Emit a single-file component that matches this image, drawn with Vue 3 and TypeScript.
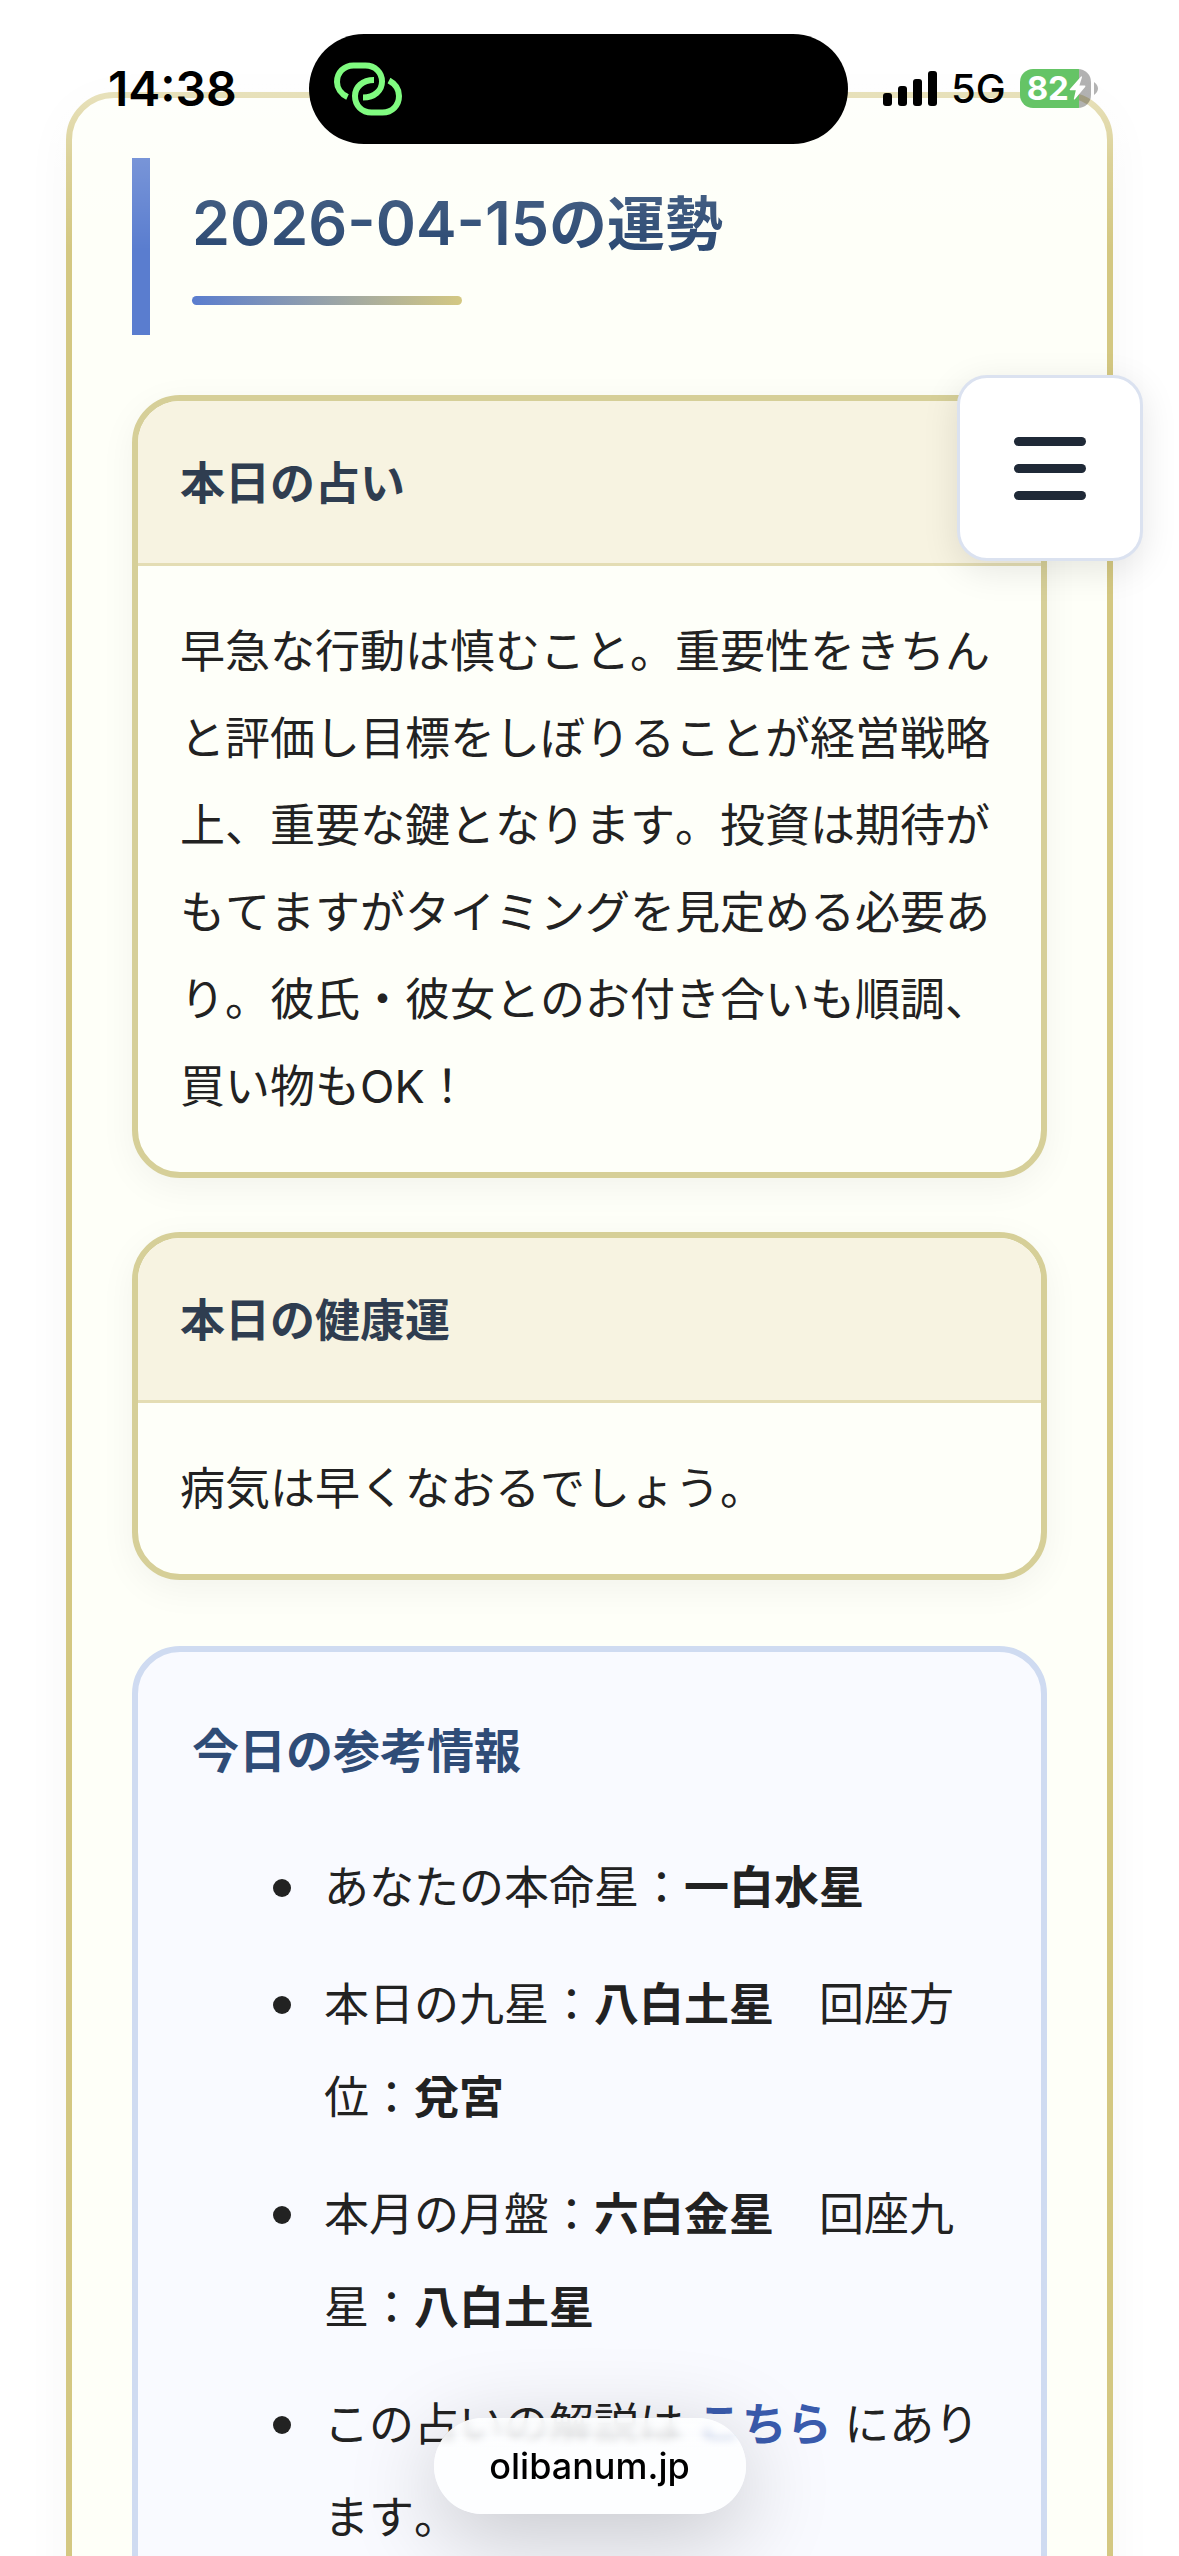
<script setup lang="ts">
interface Fortune {
  id: string
  title: string
  text: string
}

const date = '2026-04-15'

const fortunes: Fortune[] = [
  {
    id: 'today',
    title: '本日の占い',
    text: '早急な行動は慎むこと。重要性をきちんと評価し目標をしぼりることが経営戦略上、重要な鍵となります。投資は期待がもてますがタイミングを見定める必要あり。彼氏・彼女とのお付き合いも順調、買い物もOK！',
  },
  { id: 'health', title: '本日の健康運', text: '病気は早くなおるでしょう。' },
]
</script>

<template>
  <div class="screen">
    <main class="page">
      <article class="panel">
        <header class="heading">
          <h1 class="heading-title"><time>{{ date }}</time>の運勢</h1>
          <div class="heading-rule"></div>
        </header>

        <div class="cards">
          <section v-for="f in fortunes" :key="f.id" class="card">
            <h2 class="card-title">{{ f.title }}</h2>
            <p class="card-text">{{ f.text }}</p>
          </section>
        </div>

        <section class="info">
          <h2 class="info-title">今日の参考情報</h2>
          <ul class="info-list">
            <li><span>あなたの本命星：<strong>一白水星</strong></span></li>
            <li><span>本日の九星：<strong>八白土星</strong>　回座方位：<strong>兌宮</strong></span></li>
            <li><span>本月の月盤：<strong>六白金星</strong>　回座九星：<strong>八白土星</strong></span></li>
            <li><span>この占いの解説は <a href="#guide">こちら</a> にあります。</span></li>
          </ul>
        </section>
      </article>
    </main>

    <button class="menu" type="button" aria-label="メニュー">
      <span></span>
      <span></span>
      <span></span>
    </button>

    <div class="status">
      <div class="status-side status-left"><time class="clock">14:38</time></div>
      <div class="island">
        <svg class="link-icon" width="68" height="54" viewBox="0 0 68 54" fill="none" stroke="#80fb80" stroke-width="6">
          <path d="M13.500 35C7 32 3 26 3 20C3 10.500 10 3.500 19.500 3.500H31.500C41 3.500 48 10.500 48 19.500C48 28.500 40.500 35.500 29 35.500" />
          <path d="M40 18C28.500 18 21 25 21 34C21 43.500 28 50.500 37.500 50.500H48.500C58 50.500 65 43.500 65 34C65 27.500 61.500 22 55 18.500" />
        </svg>
      </div>
      <div class="status-side status-right">
        <svg width="54" height="35" viewBox="0 0 54 35" fill="#000">
          <rect x="0" y="22" width="9" height="13" rx="3" />
          <rect x="15" y="15" width="9" height="20" rx="3" />
          <rect x="30" y="8" width="9" height="27" rx="3" />
          <rect x="45" y="0" width="9" height="35" rx="3" />
        </svg>
        <span class="network">5G</span>
        <div class="battery">
          <div class="battery-body">
            <span>82</span>
            <svg width="17" height="24" viewBox="0 0 17 24" fill="#fff">
              <path d="M12 0.500L0.800 13.200Q0.300 14.300 1.500 14.300H6.800L4.800 23Q5 24 5.900 23.300L16.300 10.700Q16.800 9.600 15.600 9.600H10.400L13 1.200Q13 0 12 0.500Z" />
            </svg>
          </div>
          <svg width="4" height="13" viewBox="0 0 4 13" fill="#b3b3b3">
            <path d="M0 0C2.500 2 4 4 4 6.500S2.500 11 0 13Z" />
          </svg>
        </div>
      </div>
    </div>

    <button class="address" type="button">olibanum.jp</button>
  </div>
</template>

<style>
body {
  margin: 0;
  background: #fff;
}
</style>

<style scoped>
.screen {
  position: relative;
  height: 100vh;
  overflow: hidden;
  color: #222;
  font-family: Inter, "Noto Sans CJK JP", sans-serif;
  font-size: 45px;
  font-kerning: none;
}

h1,
h2,
p,
ul {
  margin: 0;
  padding: 0;
}

.page {
  padding: 92px 66px 0;
}

.panel {
  padding: 60px;
  border: 6px solid #d4c882;
  border-radius: 48px;
  background: #fefff8;
  box-shadow: 0 12px 48px rgba(0, 0, 0, 0.04);
}

.heading {
  padding: 18px 0 30px 42px;
  border-left: 18px solid #5a7dcf;
}

.heading-title {
  height: 94px;
  color: #2c4a73;
  font-size: 58px;
  font-weight: 600;
  line-height: 94px;
}

.heading-title time {
  font-size: 61px;
}

.heading-rule {
  width: 270px;
  height: 9px;
  margin-top: 26px;
  border-radius: 5px;
  background: linear-gradient(90deg, #5a7dcf, #d4c882);
}

.cards {
  display: flex;
  flex-direction: column;
  gap: 54px;
  margin: 60px 0 66px;
}

.card {
  overflow: hidden;
  border: 6px solid #d6cf98;
  border-radius: 48px;
  background: #fefff9;
  box-shadow: 0 9px 36px rgba(0, 0, 0, 0.05);
}

.card-title {
  padding: 38px 42px 34px;
  border-bottom: 3px solid #e4ddb4;
  background: #f7f3e1;
  color: #2f3d50;
  font-size: 45px;
  font-weight: 600;
  line-height: 90px;
}

.card-text {
  padding: 42px;
  line-height: 87px;
}

.info {
  padding: 54px;
  border: 6px solid #cfdbf1;
  border-radius: 48px;
  background: #f9faff;
}

.info-title {
  margin-bottom: 45px;
  color: #2f4c77;
  font-size: 47px;
  font-weight: 600;
  line-height: 90px;
}

.info-list {
  display: flex;
  flex-direction: column;
  gap: 24px;
  padding-left: 81px;
  list-style: none;
  line-height: 93px;
}

.info-list li {
  display: grid;
  grid-template-columns: 18px 1fr;
  column-gap: 33px;
}

.info-list li::before {
  width: 18px;
  height: 18px;
  margin-top: 38px;
  border-radius: 50%;
  background: #222;
  content: "";
}

.info-list strong {
  font-weight: 700;
}

.info-list a {
  color: #3a5bad;
  font-weight: 700;
  text-decoration: none;
}

.menu {
  position: absolute;
  top: 375px;
  right: 36px;
  display: flex;
  flex-direction: column;
  align-items: center;
  justify-content: center;
  gap: 18px;
  width: 186px;
  height: 186px;
  padding: 0;
  border: 3px solid #dbe2f0;
  border-radius: 30px;
  background: #fff;
  box-shadow: 0 9px 36px rgba(0, 0, 0, 0.1);
}

.menu span {
  width: 72px;
  height: 9px;
  border-radius: 5px;
  background: #1f2937;
}

.status {
  position: absolute;
  top: 0;
  left: 0;
  right: 0;
  display: grid;
  grid-template-columns: 1fr 539px 1fr;
  align-items: start;
  height: 216px;
  padding: 34px 22px 0 0;
  column-gap: 0;
  background: linear-gradient(rgba(255, 255, 255, 0.6), rgba(255, 255, 255, 0.45) 38%, rgba(255, 255, 255, 0.18) 64%, rgba(255, 255, 255, 0));
  color: #000;
}

.status-side {
  display: flex;
  align-items: center;
  min-width: 0;
  height: 108px;
}

.status-left {
  padding-left: 108px;
}

.status-right {
  gap: 14px;
  padding-left: 35px;
}

.clock {
  font-size: 48px;
  font-weight: 600;
}

.island {
  display: flex;
  align-items: center;
  height: 110px;
  padding-left: 25px;
  border-radius: 55px;
  background: #000;
}

.network {
  font-size: 40px;
  font-weight: 500;
}

.battery {
  display: flex;
  align-items: center;
  gap: 3px;
}

.battery-body {
  display: flex;
  align-items: center;
  width: 71px;
  height: 39px;
  padding-left: 7px;
  box-sizing: border-box;
  border-radius: 13px;
  background: linear-gradient(90deg, #65c466 83%, rgba(0, 0, 0, 0.3) 83%);
  color: #fff;
  font-size: 33px;
  font-weight: 700;
}

.address {
  position: absolute;
  bottom: 42px;
  left: 50%;
  width: 312px;
  height: 96px;
  padding: 0;
  border: 0;
  border-radius: 48px;
  transform: translateX(-50%);
  background: linear-gradient(rgba(253, 254, 255, 0.94), rgba(253, 254, 255, 0.8) 18%, rgba(253, 254, 255, 1) 32%);
  box-shadow: 0 21px 90px rgba(0, 0, 0, 0.22);
  color: #000;
  font-family: inherit;
  font-size: 36px;
  font-weight: 500;
  backdrop-filter: blur(4px);
}
</style>
